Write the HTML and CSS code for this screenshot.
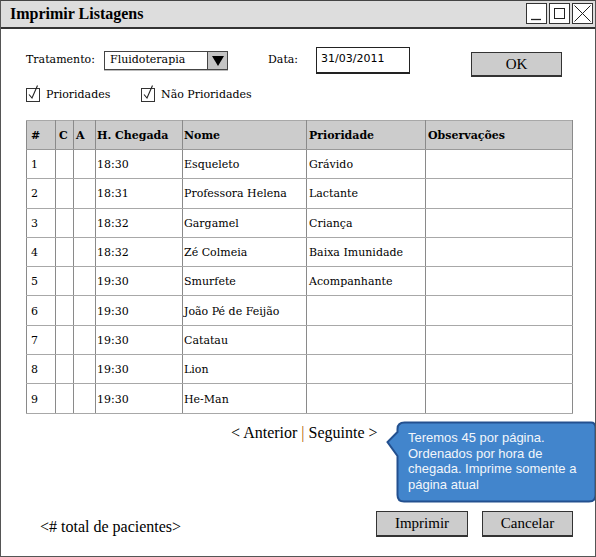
FILE: index.html
```html
<!DOCTYPE html>
<html>
<head>
<meta charset="utf-8">
<link rel="stylesheet" href="styles.css">
</head>
<body>
<div class="window">
  <div class="titlebar">
    <span class="title">Imprimir Listagens</span>
    <div class="winbtns">
      <span class="winbtn"><svg width="19" height="19" viewBox="0 0 19 19"><path d="M4 15.5 H14" stroke="#222" stroke-width="1.3"/></svg></span>
      <span class="winbtn"><svg width="19" height="19" viewBox="0 0 19 19"><rect x="4.5" y="4.5" width="10" height="10" fill="none" stroke="#222" stroke-width="1"/></svg></span>
      <span class="winbtn"><svg width="19" height="19" viewBox="0 0 19 19"><path d="M1.5 1.5 L17.5 17.5 M17.5 1.5 L1.5 17.5" stroke="#222" stroke-width="1"/></svg></span>
    </div>
  </div>

  <div class="content">
    <div class="formrow">
      <span class="lbl lbl-trat">Tratamento:</span>
      <div class="select">
        <span class="select-val">Fluidoterapia</span>
        <span class="select-arrow"><svg width="14" height="12" viewBox="0 0 14 12"><path d="M1 1 H13 L7 11 Z" fill="#000"/></svg></span>
      </div>
      <span class="lbl lbl-data">Data:</span>
      <div class="input">31/03/2011</div>
      <div class="btn btn-ok">OK</div>
    </div>

    <div class="checkrow">
      <label class="chk chk-1"><svg class="chkbox" width="16" height="18" viewBox="0 0 16 18"><rect x="0.5" y="4.5" width="13" height="13" fill="#fff" stroke="#333"/><path d="M3 10.5 L6 14 L11.5 1.5" fill="none" stroke="#222" stroke-width="1.1"/></svg><span>Prioridades</span></label>
      <label class="chk chk-2"><svg class="chkbox" width="16" height="18" viewBox="0 0 16 18"><rect x="0.5" y="4.5" width="13" height="13" fill="#fff" stroke="#333"/><path d="M3 10.5 L6 14 L11.5 1.5" fill="none" stroke="#222" stroke-width="1.1"/></svg><span>Não Prioridades</span></label>
    </div>

    <table class="grid">
      <colgroup>
        <col class="c1"><col class="c2"><col class="c3"><col class="c4"><col class="c5"><col class="c6"><col class="c7">
      </colgroup>
      <thead>
        <tr><th class="p1">#</th><th class="p2">C</th><th class="p3">A</th><th class="p4">H. Chegada</th><th class="p5">Nome</th><th class="p6">Prioridade</th><th class="p7">Observações</th></tr>
      </thead>
      <tbody>
        <tr><td class="p1">1</td><td></td><td></td><td class="p4">18:30</td><td class="p5">Esqueleto</td><td class="p6">Grávido</td><td></td></tr>
        <tr><td class="p1">2</td><td></td><td></td><td class="p4">18:31</td><td class="p5">Professora Helena</td><td class="p6">Lactante</td><td></td></tr>
        <tr><td class="p1">3</td><td></td><td></td><td class="p4">18:32</td><td class="p5">Gargamel</td><td class="p6">Criança</td><td></td></tr>
        <tr><td class="p1">4</td><td></td><td></td><td class="p4">18:32</td><td class="p5">Zé Colmeia</td><td class="p6">Baixa Imunidade</td><td></td></tr>
        <tr><td class="p1">5</td><td></td><td></td><td class="p4">19:30</td><td class="p5">Smurfete</td><td class="p6">Acompanhante</td><td></td></tr>
        <tr><td class="p1">6</td><td></td><td></td><td class="p4">19:30</td><td class="p5">João Pé de Feijão</td><td></td><td></td></tr>
        <tr><td class="p1">7</td><td></td><td></td><td class="p4">19:30</td><td class="p5">Catatau</td><td></td><td></td></tr>
        <tr><td class="p1">8</td><td></td><td></td><td class="p4">19:30</td><td class="p5">Lion</td><td></td><td></td></tr>
        <tr><td class="p1">9</td><td></td><td></td><td class="p4">19:30</td><td class="p5">He-Man</td><td></td><td></td></tr>
      </tbody>
    </table>

    <div class="pager">&lt; Anterior <span class="sep">|</span> Seguinte &gt;</div>

    <div class="bottomrow">
      <span class="total">&lt;# total de pacientes&gt;</span>
      <div class="btn btn-print">Imprimir</div>
      <div class="btn btn-cancel">Cancelar</div>
    </div>
  </div>

  <div class="tooltip">
    <svg class="tip-bg" width="212" height="84" viewBox="0 0 212 84">
      <path d="M18.5 1.5 H205 Q209.5 1.5 209.5 7 V74 Q209.5 80.5 203 80.5 H18 Q11.5 80.5 11.5 74 V35 L1.5 21 L11.5 11 V8 Q11.5 1.5 18.5 1.5 Z" fill="#4285cc" stroke="#23508f" stroke-width="2"/>
    </svg>
    <div class="tip-text">Teremos 45 por página. Ordenados por hora de chegada. Imprime somente a página atual</div>
  </div>
</div>
</body>
</html>
```

FILE: styles.css
```css
html, body {
  margin: 0;
  padding: 0;
  background: #fff;
}

.window {
  position: relative;
  width: 596px;
  height: 557px;
  box-sizing: border-box;
  border: 1px solid #555;
  border-top: 1px solid #444;
  background: #fff;
  overflow: hidden;
}

.titlebar {
  height: 28px;
  box-sizing: border-box;
  background: #dddddd;
  border-bottom: 2px solid #333;
  display: flex;
  align-items: center;
  padding-left: 9px;
}

.title {
  font-family: "Liberation Serif", serif;
  font-weight: bold;
  font-size: 16px;
  color: #000;
  margin-top: -1px;
}

.winbtns {
  margin-left: auto;
  display: flex;
  gap: 2px;
  margin-right: 2px;
  margin-top: -1px;
}

.winbtn {
  width: 19px;
  height: 19px;
  border: 1px solid #333;
  background: #fff;
  display: block;
}

.winbtn svg {
  display: block;
}

.content {
  padding: 18px 0 0 25px;
  font-family: "DejaVu Serif", serif;
  font-size: 11px;
  color: #000;
}

.formrow {
  display: flex;
  align-items: flex-start;
  height: 30px;
}

.lbl {
  display: block;
  line-height: 14px;
  margin-top: 6px;
}

.lbl-trat {
  width: 78px;
}

.select {
  width: 124px;
  height: 19px;
  box-sizing: border-box;
  border: 1px solid #444;
  margin-top: 4px;
  display: flex;
  box-shadow: 0 1px 0 #bbb;
}

.select-val {
  flex: 1;
  padding-left: 5px;
  line-height: 16px;
}

.select-arrow {
  width: 19px;
  background: #c4c4c4;
  border-left: 1px solid #444;
  display: flex;
  align-items: center;
  justify-content: center;
}

.lbl-data {
  margin-left: 40px;
  width: 48px;
}

.input {
  width: 94px;
  height: 27px;
  box-sizing: border-box;
  border: 1px solid #222;
  border-bottom-width: 2px;
  font-family: "DejaVu Sans", sans-serif;
  font-size: 11px;
  padding: 4px 0 0 4px;
}

.btn {
  box-sizing: border-box;
  background: #cccccc;
  border: 1px solid #333;
  border-bottom-width: 2px;
  font-family: "Liberation Serif", serif;
  font-size: 15px;
  text-align: center;
  display: flex;
  align-items: center;
  justify-content: center;
}

.btn-ok {
  margin-left: 61px;
  margin-top: 5px;
  width: 91px;
  height: 25px;
  font-size: 15px;
}

.checkrow {
  display: flex;
  align-items: center;
  height: 18px;
  margin-top: 7px;
}

.chk {
  display: flex;
  align-items: flex-end;
  gap: 4px;
  font-size: 11px;
  line-height: 14px;
}

.chkbox {
  display: block;
}

.chk-1 {
  width: 115px;
}

.grid {
  margin-top: 18px;
  margin-left: 0;
  border-collapse: collapse;
  table-layout: fixed;
  width: 546px;
  font-family: "DejaVu Serif", serif;
  font-size: 11px;
}

.c1 { width: 29px; }
.c2 { width: 18px; }
.c3 { width: 22px; }
.c4 { width: 87px; }
.c5 { width: 124px; }
.c6 { width: 119px; }
.c7 { width: 147px; }

.grid th,
.grid td {
  border: 1px solid #a8a8a8;
  border-left-color: #8a8a8a;
  border-right-color: #8a8a8a;
  text-align: left;
  padding: 0 0 0 1px;
  white-space: nowrap;
  overflow: hidden;
}

.grid thead tr {
  height: 29px;
  background: #cccccc;
}

.grid th {
  font-weight: bold;
  border-bottom-color: #999;
}

.grid tbody tr {
  height: 29.3px;
}

.grid td {
  padding-top: 1px;
}

.p1 { padding-left: 4px !important; }
.p2 { padding-left: 3px !important; }
.p3 { padding-left: 2px !important; }
.p4 { padding-left: 1px !important; }
.p5 { padding-left: 1px !important; }
.p6 { padding-left: 2px !important; }
.p7 { padding-left: 2px !important; }

.pager {
  margin-top: 10px;
  padding-left: 205px;
  font-family: "Liberation Serif", serif;
  font-size: 16px;
  line-height: 18px;
}

.sep {
  color: #b35c00;
}

.bottomrow {
  display: flex;
  align-items: flex-start;
  margin-top: 69px;
}

.total {
  font-family: "Liberation Serif", serif;
  font-size: 16px;
  margin-left: 14px;
  margin-top: 7px;
  width: 336px;
}

.btn-print {
  width: 92px;
  height: 26px;
}

.btn-cancel {
  margin-left: 14px;
  width: 91px;
  height: 26px;
}

.tooltip {
  position: absolute;
  left: 385px;
  top: 420px;
  width: 212px;
  height: 84px;
}

.tip-bg {
  position: absolute;
  left: 0;
  top: 0;
}

.tip-text {
  position: absolute;
  left: 22px;
  top: 9px;
  width: 185px;
  font-family: "Liberation Sans", Arial, sans-serif;
  font-size: 13px;
  line-height: 15.5px;
  color: #f2f6fb;
}
```
